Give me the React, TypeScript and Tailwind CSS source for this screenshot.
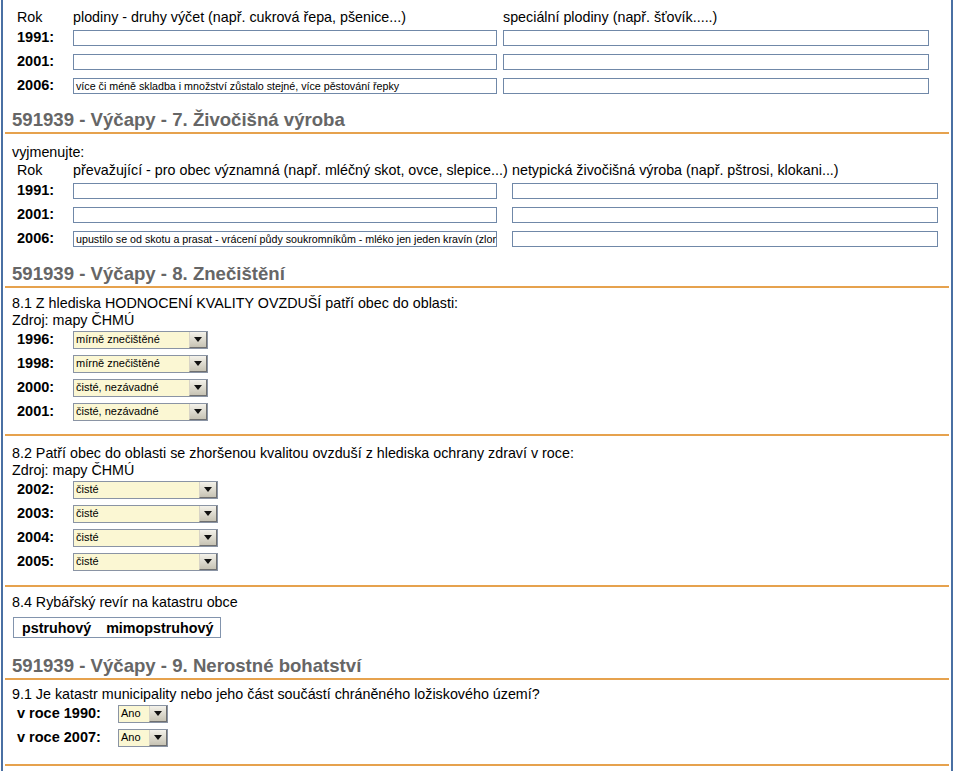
import React from "react";

const font = { fontFamily: '"Liberation Sans", Arial, sans-serif' };

function TextBox({ w, text }: { w: string; text?: string }) {
  return (
    <div
      className={`${w} h-[16px] border border-[#7088a8] bg-white text-[10.7px] leading-[14px] pl-[2px] overflow-hidden whitespace-nowrap text-black`}
    >
      {text}
    </div>
  );
}

function Select({ w, text }: { w: string; text: string }) {
  return (
    <div className={`${w} h-[18px] border border-[#8a94a4] bg-[#fbf7d3] flex items-stretch`}>
      <div className="flex-1 text-[11px] leading-[12px] pl-[2px] pt-[1px] whitespace-nowrap overflow-hidden text-black">
        {text}
      </div>
      <div className="w-[18px] bg-gradient-to-b from-[#f4f2ea] to-[#c7c3b4] border-l border-[#d8d4c6] border-r border-b border-r-[#6f6f6f] border-b-[#6f6f6f] flex items-center justify-center">
        <svg width="8" height="5" viewBox="0 0 8 5">
          <polygon points="0,0 8,0 4,5" fill="#111" />
        </svg>
      </div>
    </div>
  );
}

function Heading({ children }: { children: React.ReactNode }) {
  return (
    <div className="mx-[2px] px-[7px] pb-[1px] border-b-2 border-[#e6a24e] text-[18.6px] leading-[22px] font-bold text-[#666666]">
      {children}
    </div>
  );
}

function YearRow({ label, children }: { label: string; children: React.ReactNode }) {
  return (
    <div className="flex items-center h-[24px]">
      <div className="w-[56px] font-bold text-[14.5px]">{label}</div>
      {children}
    </div>
  );
}

export default function App() {
  return (
    <div className="bg-white min-h-[771px] text-black" style={font}>
      <div className="ml-[1px] w-[952px] min-h-[771px] border-l-2 border-r-2 border-[#4a70a3]">
        {/* Section 6 table */}
        <div className="pt-[8px] pl-[14px]">
          <div className="flex items-center h-[18px] text-[14.3px] leading-[16px]">
            <div className="w-[56px]">Rok</div>
            <div className="w-[430px]">plodiny - druhy výčet (např. cukrová řepa, pšenice...)</div>
            <div>speciální plodiny (např. šťovík.....)</div>
          </div>
          {[
            ["1991:", ""],
            ["2001:", ""],
            ["2006:", "více či méně skladba i množství zůstalo stejné, více pěstování řepky"],
          ].map(([y, t]) => (
            <div key={y} className="flex items-center h-[24px]">
              <div className="w-[56px] font-bold text-[14.5px]">{y}</div>
              <TextBox w="w-[424px]" text={t} />
              <div className="w-[6px]" />
              <TextBox w="w-[426px]" />
            </div>
          ))}
        </div>

        <div className="mt-[11px]">
          <Heading>591939 - Výčapy - 7. Živočišná výroba</Heading>
        </div>

        <div className="pl-[9px] pt-[10px] text-[14.3px] leading-[16px]">vyjmenujte:</div>
        <div className="mt-[1px] pl-[14px]">
          <div className="flex items-center h-[18px] text-[14.3px] leading-[16px]">
            <div className="w-[56px]">Rok</div>
            <div className="w-[439px] whitespace-nowrap">převažující - pro obec významná (např. mléčný skot, ovce, slepice...)</div>
            <div className="whitespace-nowrap">netypická živočišná výroba (např. pštrosi, klokani...)</div>
          </div>
          {[
            ["1991:", ""],
            ["2001:", ""],
            ["2006:", "upustilo se od skotu a prasat - vrácení půdy soukromníkům - mléko jen jeden kravín (zlon"],
          ].map(([y, t]) => (
            <div key={y} className="flex items-center h-[24px]">
              <div className="w-[56px] font-bold text-[14.5px]">{y}</div>
              <TextBox w="w-[424px]" text={t} />
              <div className="w-[15px]" />
              <TextBox w="w-[426px]" />
            </div>
          ))}
        </div>

        <div className="mt-[12px]">
          <Heading>591939 - Výčapy - 8. Znečištění</Heading>
        </div>

        {/* 8.1 */}
        <div className="mx-[2px] px-[7px] pt-[6px] pb-[10px] border-b-2 border-[#e6a24e]">
          <div className="text-[14.3px] leading-[18px]">
            8.1 Z hlediska HODNOCENÍ KVALITY OVZDUŠÍ patří obec do oblasti:
          </div>
          <div className="text-[14.3px] leading-[16px]">Zdroj: mapy ČHMÚ</div>
          <div className="pl-[5px]">
            <YearRow label="1996:">
              <Select w="w-[135px]" text="mírně znečištěné" />
            </YearRow>
            <YearRow label="1998:">
              <Select w="w-[135px]" text="mírně znečištěné" />
            </YearRow>
            <YearRow label="2000:">
              <Select w="w-[135px]" text="čisté, nezávadné" />
            </YearRow>
            <YearRow label="2001:">
              <Select w="w-[135px]" text="čisté, nezávadné" />
            </YearRow>
          </div>
        </div>

        {/* 8.2 */}
        <div className="mx-[2px] px-[7px] pt-[8px] pb-[11px] border-b-2 border-[#e6a24e]">
          <div className="text-[14.3px] leading-[18px]">
            8.2 Patří obec do oblasti se zhoršenou kvalitou ovzduší z hlediska ochrany zdraví v roce:
          </div>
          <div className="text-[14.3px] leading-[16px]">Zdroj: mapy ČHMÚ</div>
          <div className="pl-[5px]">
            {["2002:", "2003:", "2004:", "2005:"].map((y) => (
              <YearRow key={y} label={y}>
                <Select w="w-[145px]" text="čisté" />
              </YearRow>
            ))}
          </div>
        </div>

        {/* 8.4 */}
        <div className="mx-[2px] px-[7px] pt-[7px]">
          <div className="text-[14.3px] leading-[16px]">8.4 Rybářský revír na katastru obce</div>
          <div className="mt-[7px] ml-[1px] inline-flex items-center h-[21px] border border-[#8294ad] pl-[8px] pr-[7px] gap-[15px] text-[14.3px] font-bold leading-[16px]">
            <span>pstruhový</span>
            <span>mimopstruhový</span>
          </div>
        </div>

        <div className="mt-[15px]">
          <Heading>591939 - Výčapy - 9. Nerostné bohatství</Heading>
        </div>

        {/* 9.1 */}
        <div className="mx-[2px] px-[7px] pt-[6px] pb-[14px] border-b-2 border-[#e6a24e]">
          <div className="text-[14.3px] leading-[16px]">
            9.1 Je katastr municipality nebo jeho část součástí chráněného ložiskového území?
          </div>
          <div className="pl-[5px]">
            {["v roce 1990:", "v roce 2007:"].map((y) => (
              <div key={y} className="flex items-center h-[24px]">
                <div className="w-[101px] font-bold text-[14.5px]">{y}</div>
                <Select w="w-[50px]" text="Ano" />
              </div>
            ))}
          </div>
        </div>
      </div>
    </div>
  );
}
